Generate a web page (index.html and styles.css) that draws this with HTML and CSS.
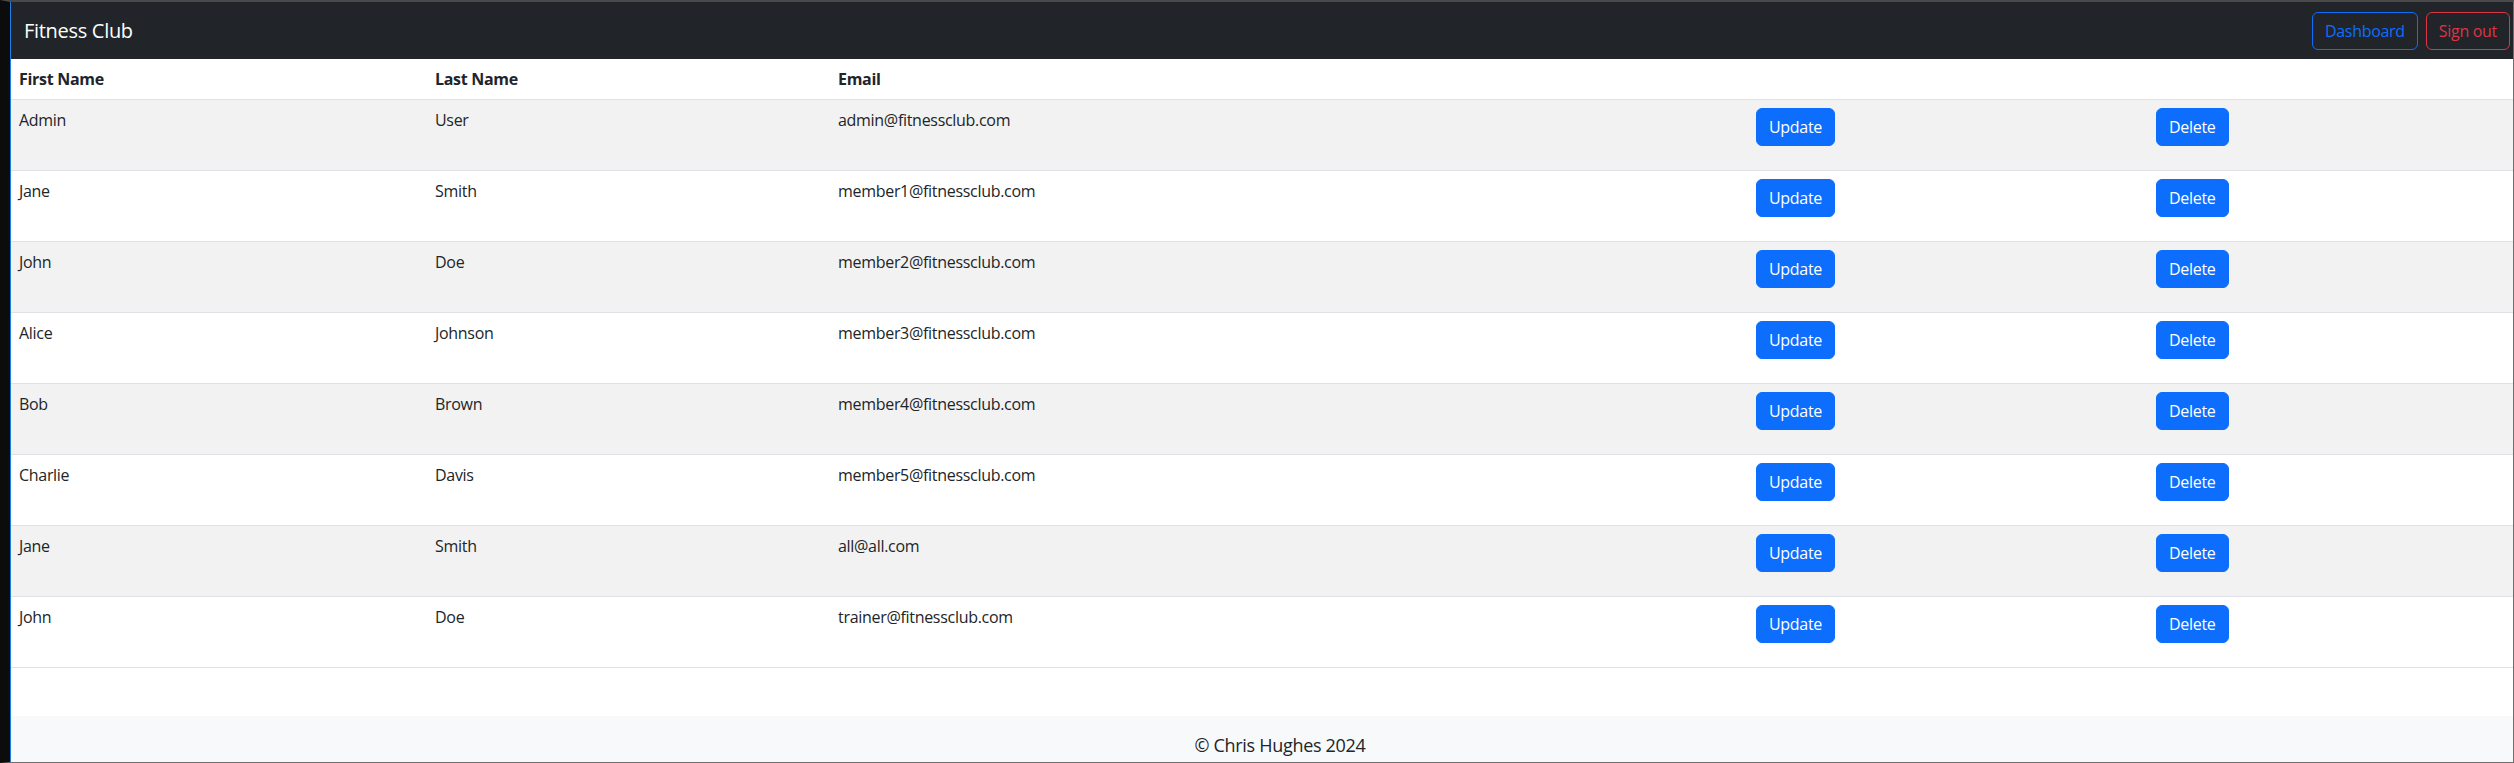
FILE: index.html
```html
<!DOCTYPE html>
<html lang="en">
<head>
<meta charset="utf-8">
<title>Fitness Club</title>
<link rel="stylesheet" href="styles.css">
</head>
<body>
<div class="window-frame"></div>
<div class="app">
  <nav class="navbar">
    <span class="brand">Fitness Club</span>
    <div class="nav-actions">
      <a class="btn btn-outline-primary" href="#">Dashboard</a>
      <a class="btn btn-outline-danger" href="#">Sign out</a>
    </div>
  </nav>
  <main class="content">
    <table class="members">
      <colgroup>
        <col class="col-first"><col class="col-last"><col class="col-email"><col class="col-update"><col class="col-delete">
      </colgroup>
      <thead>
        <tr><th>First Name</th><th>Last Name</th><th>Email</th><th></th><th></th></tr>
      </thead>
      <tbody>
        <tr><td>Admin</td><td>User</td><td>admin@fitnessclub.com</td><td><form class="row-form"><button type="button" class="btn btn-primary">Update</button></form></td><td><form class="row-form"><button type="button" class="btn btn-primary">Delete</button></form></td></tr>
        <tr><td>Jane</td><td>Smith</td><td>member1@fitnessclub.com</td><td><form class="row-form"><button type="button" class="btn btn-primary">Update</button></form></td><td><form class="row-form"><button type="button" class="btn btn-primary">Delete</button></form></td></tr>
        <tr><td>John</td><td>Doe</td><td>member2@fitnessclub.com</td><td><form class="row-form"><button type="button" class="btn btn-primary">Update</button></form></td><td><form class="row-form"><button type="button" class="btn btn-primary">Delete</button></form></td></tr>
        <tr><td>Alice</td><td>Johnson</td><td>member3@fitnessclub.com</td><td><form class="row-form"><button type="button" class="btn btn-primary">Update</button></form></td><td><form class="row-form"><button type="button" class="btn btn-primary">Delete</button></form></td></tr>
        <tr><td>Bob</td><td>Brown</td><td>member4@fitnessclub.com</td><td><form class="row-form"><button type="button" class="btn btn-primary">Update</button></form></td><td><form class="row-form"><button type="button" class="btn btn-primary">Delete</button></form></td></tr>
        <tr><td>Charlie</td><td>Davis</td><td>member5@fitnessclub.com</td><td><form class="row-form"><button type="button" class="btn btn-primary">Update</button></form></td><td><form class="row-form"><button type="button" class="btn btn-primary">Delete</button></form></td></tr>
        <tr><td>Jane</td><td>Smith</td><td>all@all.com</td><td><form class="row-form"><button type="button" class="btn btn-primary">Update</button></form></td><td><form class="row-form"><button type="button" class="btn btn-primary">Delete</button></form></td></tr>
        <tr><td>John</td><td>Doe</td><td>trainer@fitnessclub.com</td><td><form class="row-form"><button type="button" class="btn btn-primary">Update</button></form></td><td><form class="row-form"><button type="button" class="btn btn-primary">Delete</button></form></td></tr>
      </tbody>
    </table>
  </main>
  <footer class="footer">© Chris Hughes 2024</footer>
</div>
</body>
</html>
```

FILE: styles.css
```css
* { box-sizing: border-box; }

html, body {
  margin: 0;
  padding: 0;
  background: #ffffff;
}

body {
  font-family: "Open Sans", "Noto Sans", sans-serif;
  font-size: 16px;
  line-height: 1.5;
  letter-spacing: -0.3px;
  color: #212529;
  overflow: hidden;
}

.window-frame {
  position: fixed;
  inset: 0;
  border-top: 2px solid #4a4a4a;
  border-left: 10px solid #0c0c0c;
  border-right: 1px solid #6e6e6e;
  border-bottom: 1px solid #6e6e6e;
  box-shadow: inset 1px 0 0 #1d7fe6;
  pointer-events: none;
  z-index: 10;
}

.app {
  padding: 2px 1px 0 11px;
}

.navbar {
  height: 57px;
  background: #212529;
  display: flex;
  align-items: center;
  justify-content: space-between;
  padding: 0 3px 0 13px;
}

.brand {
  color: #ffffff;
  font-size: 20px;
  line-height: 30px;
}

.nav-actions {
  display: flex;
  gap: 8px;
}

.btn {
  display: inline-block;
  font-family: inherit;
  font-size: 16px;
  line-height: 24px;
  letter-spacing: -0.3px;
  padding: 6px 12px;
  border: 1px solid transparent;
  border-radius: 6px;
  text-decoration: none;
  cursor: pointer;
  background: transparent;
}

.btn-outline-primary {
  color: #0d6efd;
  border-color: #0d6efd;
}

.btn-outline-danger {
  color: #dc3545;
  border-color: #dc3545;
}

.btn-primary {
  color: #ffffff;
  background: #0d6efd;
  border-color: #0d6efd;
}

.members {
  width: 100%;
  border-collapse: collapse;
  table-layout: fixed;
  margin-bottom: 48px;
}

.col-first { width: 416px; }
.col-last { width: 403px; }
.col-email { width: 918px; }
.col-update { width: 400px; }
.col-delete { width: auto; }

.members th,
.members td {
  text-align: left;
  vertical-align: top;
  padding: 8px;
  border-bottom: 1px solid #dee2e6;
}

.members th {
  font-weight: 700;
}

.members tbody tr:nth-child(odd) {
  background: #f2f2f2;
}

.row-form {
  margin: 0 0 16px;
}

.footer {
  background: #f8f9fa;
  text-align: center;
  font-size: 18px;
  line-height: 27px;
  padding: 16px 0 16px 36px;
  color: #212529;
}
```
